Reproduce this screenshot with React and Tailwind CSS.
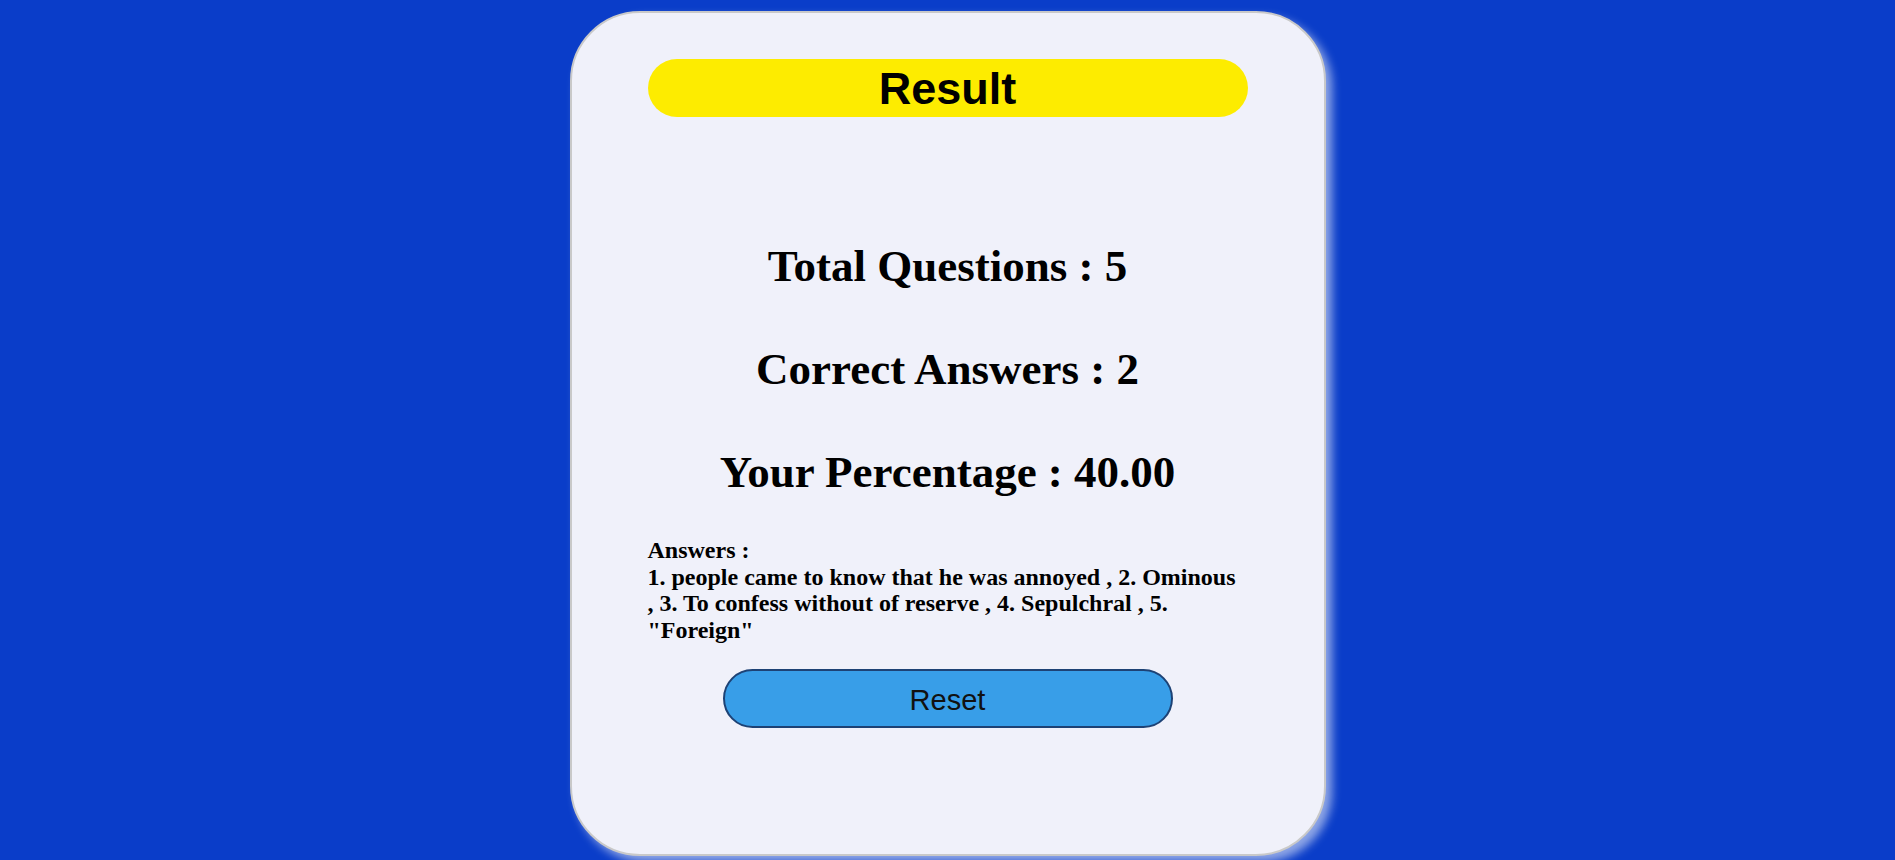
export default function App() {
  return (
    <div className="h-[860px] overflow-hidden bg-[#0a3dc9] flex justify-center">
      {/* Result card */}
      <div className="mt-[11px] w-[756px] h-[845px] rounded-[70px] border-2 border-[#c9c9c9] bg-[#f0f1fa] shadow-[6px_6px_10px_rgba(255,255,255,0.55)] flex flex-col items-center">
        <div className="mt-[46px] w-[600px] h-[58px] rounded-full bg-[#fdec00] flex items-center justify-center">
          <h1 className="text-[45px] font-bold text-black font-['Liberation_Sans',Arial,sans-serif] leading-none">
            Result
          </h1>
        </div>

        <div className="mt-[124px] flex flex-col items-center gap-[53px] font-['Liberation_Serif','Times_New_Roman',serif] font-bold text-[45px] leading-[50px] text-black">
          <div>Total Questions : 5</div>
          <div>Correct Answers : 2</div>
          <div>Your Percentage : 40.00</div>
        </div>

        <div className="mt-[40px] w-[600px]">
          <p className="w-[594px] font-['Liberation_Serif','Times_New_Roman',serif] font-bold text-[24px] leading-[26.6px] text-black">
            Answers :
            <br />
            1. people came to know that he was annoyed , 2. Ominous , 3. To confess without of reserve , 4. Sepulchral , 5. "Foreign"
          </p>
        </div>

        <button className="mt-[26px] w-[450px] h-[59px] pt-[3px] rounded-full border-2 border-[#1d4275] bg-[#389ee8] text-[29px] text-[#111] font-['Liberation_Sans',Arial,sans-serif]">
          Reset
        </button>
      </div>
    </div>
  );
}
